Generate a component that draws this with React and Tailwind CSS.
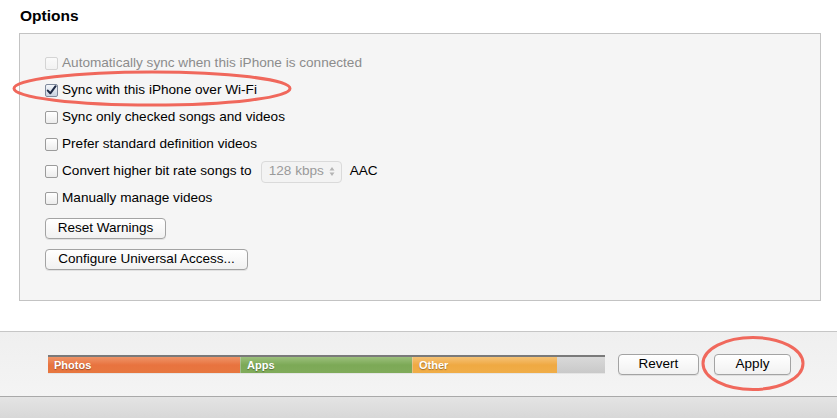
import React from 'react';

function Checkbox({ checked, disabled }) {
  return (
    <span
      className={`inline-flex h-[13px] w-[13px] shrink-0 items-center justify-center rounded-[2px] border bg-gradient-to-b ${
        disabled
          ? 'border-[#d4d4d4] from-[#fafafa] to-[#f2f2f2]'
          : checked
          ? 'border-[#7f8a9c] from-[#f4f7fb] to-[#c9d3e0]'
          : 'border-[#9b9b9b] from-white to-[#ececec]'
      }`}
    >
      {checked && (
        <svg width="11" height="11" viewBox="0 0 11 11">
          <path d="M1.8 5.6 L4.3 8.3 L9.6 1.2" fill="none" stroke="#1f2a44" strokeWidth="2" strokeLinecap="round" strokeLinejoin="round" />
        </svg>
      )}
    </span>
  );
}

function Row({ children, checked, disabled }) {
  return (
    <div className="flex h-[27px] items-center gap-[4px]">
      <Checkbox checked={checked} disabled={disabled} />
      <span className={disabled ? 'text-[#8c8c8c]' : 'text-black'}>{children}</span>
    </div>
  );
}

function MacButton({ children, className = '' }) {
  return (
    <button
      className={`flex h-[21px] items-center justify-center rounded-[4px] border border-[#a3a3a3] bg-gradient-to-b from-white to-[#f1f1f1] text-[13.5px] text-black shadow-[0_1px_0_rgba(0,0,0,0.08)] ${className}`}
    >
      {children}
    </button>
  );
}

export default function App() {
  const segments = [
    { label: 'Photos', width: 192, cls: 'bg-gradient-to-b from-[#ee9467] via-[#e8733f] to-[#e7773f]' },
    { label: 'Apps', width: 172, cls: 'bg-gradient-to-b from-[#9cc07c] via-[#7ca956] to-[#80ab5a]' },
    { label: 'Other', width: 145, cls: 'bg-gradient-to-b from-[#f5c274] via-[#efa942] to-[#f0ad48]' },
  ];

  return (
    <div className="relative h-[419px] w-[837px] overflow-hidden bg-white font-['Liberation_Sans',Arial,sans-serif] text-[13.6px]">
      {/* Options */}
      <div className="pl-[20px] pt-[7px]">
        <h2 className="h-[26px] text-[15.5px] font-bold leading-[18px] text-black">Options</h2>
      </div>
      <div className="ml-[19px] h-[268px] w-[802px] border border-[#c3c3c3] bg-[#f5f5f5] pl-[25px] pt-[16px]">
        <Row disabled>Automatically sync when this iPhone is connected</Row>
        <Row checked>Sync with this iPhone over Wi-Fi</Row>
        <Row>Sync only checked songs and videos</Row>
        <Row>Prefer standard definition videos</Row>
        <div className="flex h-[27px] items-center gap-[4px]">
          <Checkbox />
          <span>Convert higher bit rate songs to</span>
          <div className="ml-[5px] flex h-[22px] w-[81px] items-center justify-between rounded-[4px] border border-[#dadada] bg-[#f3f3f3] pl-[7px] pr-[6px] text-[#9a9a9a]">
            <span>128 kbps</span>
            <svg width="6" height="11" viewBox="0 0 6 11">
              <path d="M3 1 L5.5 4.5 H0.5 Z M3 10 L5.5 6.5 H0.5 Z" fill="#b4b4b4" />
            </svg>
          </div>
          <span className="ml-[4px]">AAC</span>
        </div>
        <Row>Manually manage videos</Row>
        <MacButton className="mt-[6px] w-[121px]">Reset Warnings</MacButton>
        <MacButton className="mt-[10px] w-[203px]">Configure Universal Access...</MacButton>
      </div>

      {/* Bottom bar */}
      <div className="mt-[30px] border-t border-[#c6c6c6] bg-gradient-to-b from-[#efefef] to-[#f4f4f4]">
        <div className="flex h-[64px] items-center pl-[48px]">
          <div className="flex h-[18px] w-[557px] overflow-hidden border-t-2 border-[#7a7a7a] shadow-[0_1px_0_rgba(0,0,0,0.05)]">
            {segments.map((s, i) => (
              <div
                key={s.label}
                className={`flex h-full items-center pl-[6px] text-[11px] font-bold text-white [text-shadow:0_1px_1px_rgba(0,0,0,0.35)] ${s.cls} ${i > 0 ? 'border-l border-[#dcdcdc]/40' : ''}`}
                style={{ width: s.width }}
              >
                {s.label}
              </div>
            ))}
            <div className="h-full flex-1 bg-gradient-to-b from-[#d9d9d9] to-[#c9c9c9]" />
          </div>
          <MacButton className="ml-[13px] w-[81px]">Revert</MacButton>
          <MacButton className="ml-[15px] w-[77px]">Apply</MacButton>
        </div>
      </div>
      <div className="h-[22px] border-t border-[#a9a9a9] bg-gradient-to-b from-[#e4e4e4] to-[#d8d8d8]" />

      {/* Red annotation ellipses */}
      <svg className="pointer-events-none absolute left-0 top-0" width="837" height="419">
        <ellipse cx="152" cy="88.5" rx="138" ry="16.5" fill="none" stroke="#f0685c" strokeWidth="3" />
        <ellipse cx="753" cy="363.5" rx="50" ry="26" fill="none" stroke="#f0685c" strokeWidth="3" />
      </svg>
    </div>
  );
}
